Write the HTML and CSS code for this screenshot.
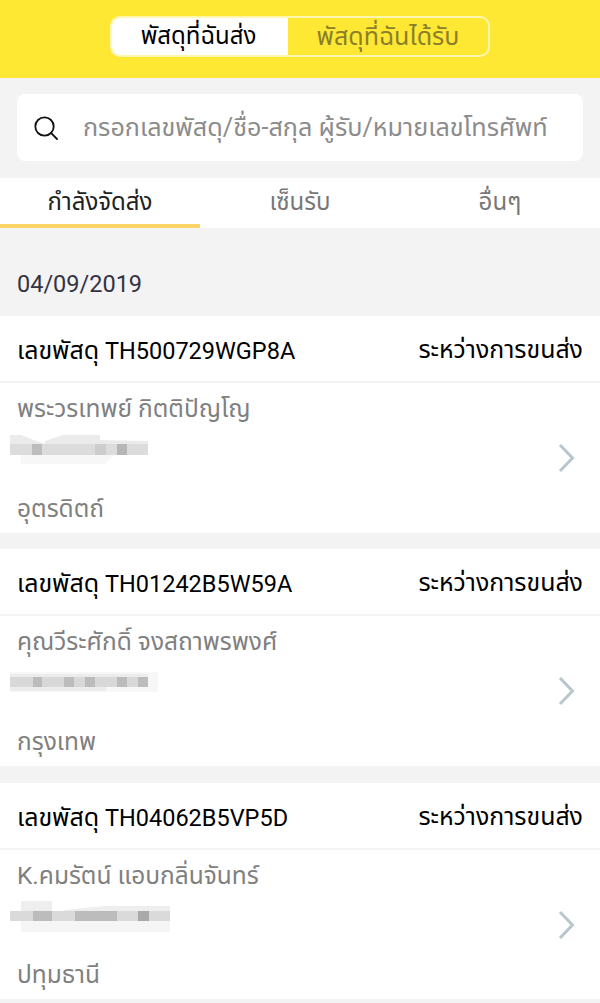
FILE: index.html
```html
<!DOCTYPE html>
<html lang="th">
<head>
<meta charset="utf-8">
<title>พัสดุ</title>
<link rel="stylesheet" href="styles.css">
</head>
<body>
<header class="top">
  <div class="toggle">
    <div class="toggle-item active">พัสดุที่ฉันส่ง</div>
    <div class="toggle-item">พัสดุที่ฉันได้รับ</div>
  </div>
</header>
<div class="search">
  <svg class="search-icon" width="26" height="26" viewBox="0 0 26 26" fill="none" stroke="#111" stroke-width="1.8"><circle cx="11.5" cy="11.5" r="9.2"/><path d="M18.2 18.2l5.8 5.8" stroke-linecap="round"/></svg>
  <span class="search-text">กรอกเลขพัสดุ/ชื่อ-สกุล ผู้รับ/หมายเลขโทรศัพท์</span>
</div>
<nav class="tabs">
  <div class="tab current">กำลังจัดส่ง</div>
  <div class="tab">เซ็นรับ</div>
  <div class="tab">อื่นๆ</div>
</nav>
<div class="date">04/09/2019</div>

<section class="card">
  <div class="card-head"><span><span class="label">เลขพัสดุ</span> TH500729WGP8A</span><span class="status">ระหว่างการขนส่ง</span></div>
  <div class="card-body">
    <div class="info">
      <div class="line">พระวรเทพย์ กิตติปัญโญ</div>
      <svg class="mosaic" width="200" height="50" viewBox="0 0 200 50">
        <g filter="url(#soft)">
          <path fill="#f7f7f7" d="M21 20h95l-12 10H21z"/>
          <path fill="#ebebeb" d="M10 1h11l10 4 14 5H10zM45 7l18-6h37v5l48 1v3H45z"/>
          <path fill="#dcdcdc" d="M10 10h138v11H10z"/>
          <path fill="#bdbdbd" d="M32 10h10v11H32z"/>
          <path fill="#cdcdcd" d="M95 10h11v11H95z"/>
          <path fill="#b6b6b6" d="M117 10h10v11h-10z"/>
        </g>
      </svg>
      <div class="line">อุตรดิตถ์</div>
    </div>
    <svg class="chev" width="18" height="30" viewBox="0 0 18 30" fill="none" stroke="#b9c6cd" stroke-width="3"><path d="M2 2l12.5 13L2 28"/></svg>
  </div>
</section>

<section class="card">
  <div class="card-head"><span><span class="label">เลขพัสดุ</span> TH01242B5W59A</span><span class="status">ระหว่างการขนส่ง</span></div>
  <div class="card-body">
    <div class="info">
      <div class="line">คุณวีระศักดิ์ จงสถาพรพงศ์</div>
      <svg class="mosaic" width="200" height="50" viewBox="0 0 200 50">
        <g filter="url(#soft)">
          <path fill="#f7f7f7" d="M10 5h148v20H10z"/>
          <path fill="#ececec" d="M10 7h138v3H10zM10 20h96v4H10z"/>
          <path fill="#d8d8d8" d="M10 10h138v10H10z"/>
          <path fill="#bcbcbc" d="M33 10h9v10h-9zM64 10h10v10H64zM85 10h10v10H85zM117 10h10v10h-10zM138 10h10v10h-10z"/>
        </g>
      </svg>
      <div class="line">กรุงเทพ</div>
    </div>
    <svg class="chev" width="18" height="30" viewBox="0 0 18 30" fill="none" stroke="#b9c6cd" stroke-width="3"><path d="M2 2l12.5 13L2 28"/></svg>
  </div>
</section>

<section class="card last">
  <div class="card-head"><span><span class="label">เลขพัสดุ</span> TH04062B5VP5D</span><span class="status">ระหว่างการขนส่ง</span></div>
  <div class="card-body">
    <div class="info">
      <div class="line">K.คมรัตน์ แอบกลิ่นจันทร์</div>
      <svg class="mosaic" width="200" height="50" viewBox="0 0 200 50">
        <g filter="url(#soft)">
          <path fill="#f5f5f5" d="M21 20h149v11H21z"/>
          <path fill="#eeeeee" d="M21 0h31v10H21zM64 9l42-4h64v5H64z"/>
          <path fill="#dadada" d="M10 10h160v10H10z"/>
          <path fill="#bcbcbc" d="M33 10h19v10H33zM75 10h42v10H75z"/>
          <path fill="#a9a9a9" d="M138 10h11v10h-11z"/>
        </g>
      </svg>
      <div class="line">ปทุมธานี</div>
    </div>
    <svg class="chev" width="18" height="30" viewBox="0 0 18 30" fill="none" stroke="#b9c6cd" stroke-width="3"><path d="M2 2l12.5 13L2 28"/></svg>
  </div>
</section>
<svg class="defs" width="0" height="0"><filter id="soft"><feGaussianBlur stdDeviation="0.6"/></filter></svg>
</body>
</html>
```
FILE: styles.css
```css
* { box-sizing: border-box; }
html, body { margin: 0; padding: 0; }
body {
  width: 600px;
  height: 1003px;
  overflow: hidden;
  background: #f3f3f3;
  font-family: Roboto, "Noto Sans", "Noto Sans Thai", sans-serif;
  font-size: 24px;
  color: #000;
}
.top {
  height: 78px;
  background: #ffe833;
  padding-top: 16px;
  display: flex;
  justify-content: center;
}
.toggle {
  width: 380px;
  height: 41px;
  display: flex;
  border: 2px solid #fff7b0;
  border-radius: 10px;
  overflow: hidden;
}
.toggle-item {
  flex: 1;
  display: flex;
  align-items: center;
  justify-content: center;
  color: #8b7f2c;
  font-size: 25px;
  white-space: nowrap;
}
.toggle-item.active {
  flex: 0 0 176px;
  padding-right: 3px;
  background: #fff;
  color: #000;
  font-size: 24px;
}
.search {
  height: 67px;
  margin: 16px 17px 17px;
  background: #fff;
  border-radius: 8px;
  padding-left: 16px;
  display: flex;
  align-items: center;
  gap: 24px;
}
.search-icon { flex: none; }
.search-text { color: #8c8c8c; font-size: 25.2px; white-space: nowrap; }
.tabs {
  height: 50px;
  background: #fff;
  display: flex;
}
.tab {
  flex: 1;
  display: flex;
  align-items: center;
  justify-content: center;
  color: #777;
  font-size: 24px;
  border-bottom: 4px solid transparent;
  padding-top: 4px;
}
.tab.current {
  color: #222;
  border-bottom-color: #ffd466;
}
.date {
  height: 88px;
  padding: 41px 17px 0;
  color: #333344;
  font-size: 23.5px;
  line-height: 30px;
}
.card {
  background: #fff;
  height: 217px;
  margin-bottom: 16px;
  display: flex;
  flex-direction: column;
}
.card + .card { margin-bottom: 17px; }
.card.last { margin-bottom: 0; height: 216px; }
.card-head {
  height: 67px;
  flex: none;
  padding: 4px 17px 0;
  border-bottom: 2px solid #f3f3f3;
  display: flex;
  justify-content: space-between;
  align-items: center;
  font-size: 23.5px;
  white-space: nowrap;
}
.label { font-size: 25px; }
.status { font-size: 24.9px; }
.card-body {
  flex: 1;
  min-height: 0;
  padding: 9px 24px 7px 17px;
  display: flex;
  justify-content: space-between;
  align-items: center;
}
.info {
  display: flex;
  flex-direction: column;
  justify-content: space-between;
  height: 100%;
  color: #808080;
  font-size: 24.5px;
}
.line { line-height: 34px; white-space: nowrap; }
.mosaic { display: block; margin-left: -17px; }
.chev { flex: none; margin-bottom: 2px; }
.defs { display: block; height: 0; }
```
